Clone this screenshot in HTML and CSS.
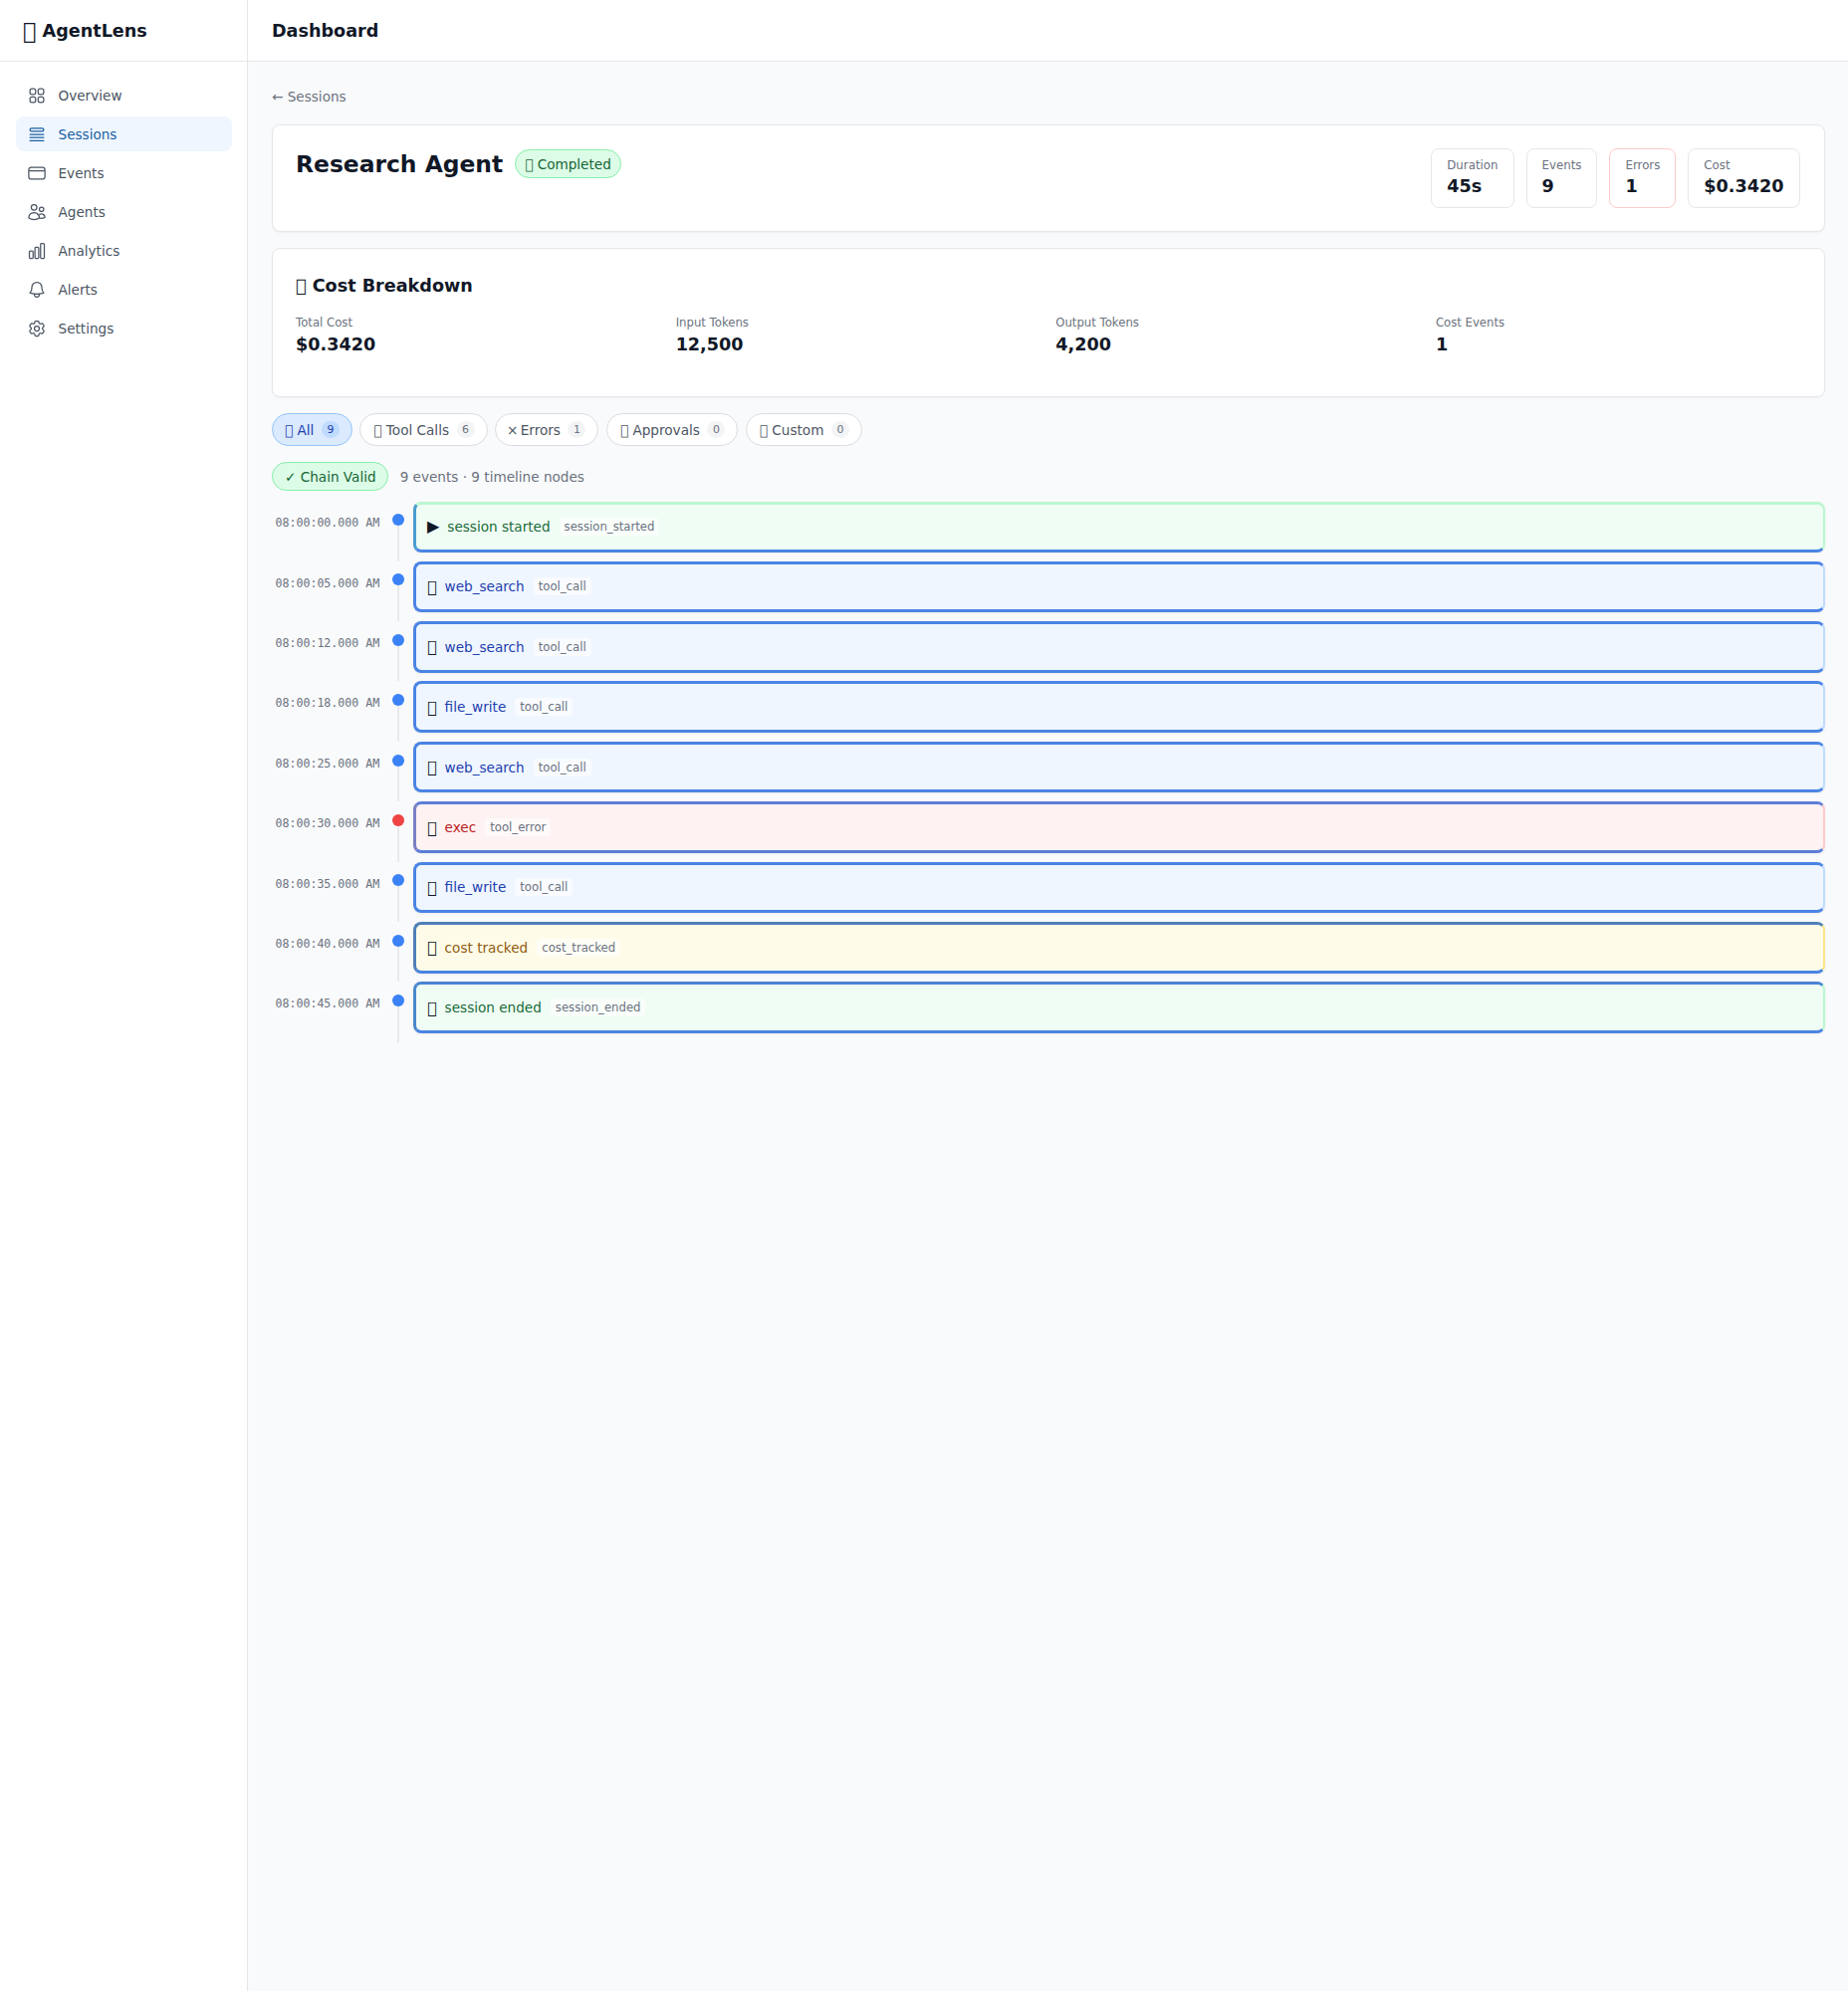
FILE: index.html
```html
<!DOCTYPE html>
<html lang="en">
<head>
<meta charset="utf-8">
<title>AgentLens</title>
<link rel="stylesheet" href="styles.css">
</head>
<body>
<div class="app">
  <aside class="sidebar">
    <div class="brand"><span class="brand-icon">&#xE0FF;</span> AgentLens</div>
    <nav class="nav">
      <a class="nav-item"><svg class="nav-icon" viewBox="0 0 24 24"><path d="M3.75 6A2.25 2.25 0 0 1 6 3.75h2.25A2.25 2.25 0 0 1 10.5 6v2.25a2.25 2.25 0 0 1-2.25 2.25H6a2.25 2.25 0 0 1-2.25-2.25V6ZM3.75 15.75A2.25 2.25 0 0 1 6 13.5h2.25a2.25 2.25 0 0 1 2.25 2.25V18a2.25 2.25 0 0 1-2.25 2.25H6A2.25 2.25 0 0 1 3.75 18v-2.25ZM13.5 6a2.25 2.25 0 0 1 2.25-2.25H18A2.25 2.25 0 0 1 20.25 6v2.25A2.25 2.25 0 0 1 18 10.5h-2.25a2.25 2.25 0 0 1-2.25-2.25V6ZM13.5 15.75a2.25 2.25 0 0 1 2.25-2.25H18a2.25 2.25 0 0 1 2.25 2.25V18A2.25 2.25 0 0 1 18 20.25h-2.25A2.25 2.25 0 0 1 13.5 18v-2.25Z"/></svg>Overview</a>
      <a class="nav-item active"><svg class="nav-icon" viewBox="0 0 24 24"><path d="M3.75 12h16.5m-16.5 3.75h16.5M3.75 19.5h16.5M5.625 4.5h12.75a1.875 1.875 0 0 1 0 3.75H5.625a1.875 1.875 0 0 1 0-3.75Z"/></svg>Sessions</a>
      <a class="nav-item"><svg class="nav-icon" viewBox="0 0 24 24"><path d="M2.25 9h19.5M5.25 4.875h13.5a3 3 0 0 1 3 3v8.25a3 3 0 0 1-3 3H5.25a3 3 0 0 1-3-3v-8.25a3 3 0 0 1 3-3Z"/></svg>Events</a>
      <a class="nav-item"><svg class="nav-icon" viewBox="0 0 24 24"><path d="M15 19.128a9.38 9.38 0 0 0 2.625.372 9.337 9.337 0 0 0 4.121-.952 4.125 4.125 0 0 0-7.533-2.493M15 19.128v-.003c0-1.113-.285-2.16-.786-3.07M15 19.128v.106A12.318 12.318 0 0 1 8.624 21c-2.331 0-4.512-.645-6.374-1.766l-.001-.109a6.375 6.375 0 0 1 11.964-3.07M12 6.375a3.375 3.375 0 1 1-6.75 0 3.375 3.375 0 0 1 6.75 0Zm8.25 2.25a2.625 2.625 0 1 1-5.25 0 2.625 2.625 0 0 1 5.25 0Z"/></svg>Agents</a>
      <a class="nav-item"><svg class="nav-icon" viewBox="0 0 24 24"><path d="M3 13.125C3 12.504 3.504 12 4.125 12h2.25c.621 0 1.125.504 1.125 1.125v6.75C7.5 20.496 6.996 21 6.375 21h-2.25A1.125 1.125 0 0 1 3 19.875v-6.75ZM9.75 8.625c0-.621.504-1.125 1.125-1.125h2.25c.621 0 1.125.504 1.125 1.125v11.25c0 .621-.504 1.125-1.125 1.125h-2.25a1.125 1.125 0 0 1-1.125-1.125V8.625ZM16.5 4.125c0-.621.504-1.125 1.125-1.125h2.25C20.496 3 21 3.504 21 4.125v15.75c0 .621-.504 1.125-1.125 1.125h-2.25a1.125 1.125 0 0 1-1.125-1.125V4.125Z"/></svg>Analytics</a>
      <a class="nav-item"><svg class="nav-icon" viewBox="0 0 24 24"><path d="M14.857 17.082a23.848 23.848 0 0 0 5.454-1.31A8.967 8.967 0 0 1 18 9.75V9A6 6 0 0 0 6 9v.75a8.967 8.967 0 0 1-2.312 6.022c1.733.64 3.56 1.085 5.455 1.31m5.714 0a24.255 24.255 0 0 1-5.714 0m5.714 0a3 3 0 1 1-5.714 0"/></svg>Alerts</a>
      <a class="nav-item"><svg class="nav-icon" viewBox="0 0 24 24"><path d="M9.594 3.94c.09-.542.56-.94 1.11-.94h2.593c.55 0 1.02.398 1.11.94l.213 1.281c.063.374.313.686.645.87.074.04.147.083.22.127.325.196.72.257 1.075.124l1.217-.456a1.125 1.125 0 0 1 1.37.49l1.296 2.247a1.125 1.125 0 0 1-.26 1.431l-1.003.827c-.293.241-.438.613-.43.992a7.723 7.723 0 0 1 0 .255c-.008.378.137.75.43.991l1.004.827c.424.35.534.955.26 1.43l-1.298 2.247a1.125 1.125 0 0 1-1.369.491l-1.217-.456c-.355-.133-.75-.072-1.076.124a6.47 6.47 0 0 1-.22.128c-.331.183-.581.495-.644.869l-.213 1.281c-.09.543-.56.94-1.11.94h-2.594c-.55 0-1.019-.398-1.11-.94l-.213-1.281c-.062-.374-.312-.686-.644-.87a6.52 6.52 0 0 1-.22-.127c-.325-.196-.72-.257-1.076-.124l-1.217.456a1.125 1.125 0 0 1-1.369-.49l-1.297-2.247a1.125 1.125 0 0 1 .26-1.431l1.004-.827c.292-.24.437-.613.43-.991a6.932 6.932 0 0 1 0-.255c.007-.38-.138-.751-.43-.992l-1.004-.827a1.125 1.125 0 0 1-.26-1.43l1.297-2.247a1.125 1.125 0 0 1 1.37-.491l1.216.456c.356.133.751.072 1.076-.124.072-.044.146-.086.22-.128.332-.183.582-.495.644-.869l.214-1.28Z"/><path d="M15 12a3 3 0 1 1-6 0 3 3 0 0 1 6 0Z"/></svg>Settings</a>
    </nav>
  </aside>
  <div class="content">
    <header class="topbar">Dashboard</header>
    <main class="main">
      <a class="back">← Sessions</a>
      <section class="card head-card">
        <div class="title-wrap">
          <h1 class="title">Research Agent</h1>
          <span class="status">&#xE0FF; Completed</span>
        </div>
        <div class="stats">
          <div class="stat"><div class="stat-label">Duration</div><div class="stat-value">45s</div></div>
          <div class="stat"><div class="stat-label">Events</div><div class="stat-value">9</div></div>
          <div class="stat stat-error"><div class="stat-label">Errors</div><div class="stat-value">1</div></div>
          <div class="stat"><div class="stat-label">Cost</div><div class="stat-value">$0.3420</div></div>
        </div>
      </section>
      <section class="card cost-card">
        <h2 class="cost-title">&#xE0FF; Cost Breakdown</h2>
        <div class="cost-grid">
          <div><div class="cost-label">Total Cost</div><div class="cost-value">$0.3420</div></div>
          <div><div class="cost-label">Input Tokens</div><div class="cost-value">12,500</div></div>
          <div><div class="cost-label">Output Tokens</div><div class="cost-value">4,200</div></div>
          <div><div class="cost-label">Cost Events</div><div class="cost-value">1</div></div>
        </div>
      </section>
      <div class="filters">
        <button class="pill pill-active"><span>&#xE0FF; All</span><span class="count">9</span></button>
        <button class="pill"><span>&#xE0FF; Tool Calls</span><span class="count">6</span></button>
        <button class="pill"><span><span class="x-mark">×</span> Errors</span><span class="count">1</span></button>
        <button class="pill"><span>&#xE0FF; Approvals</span><span class="count">0</span></button>
        <button class="pill"><span>&#xE0FF; Custom</span><span class="count">0</span></button>
      </div>
      <div class="chain-row">
        <span class="chain">✓ Chain Valid</span>
        <span class="chain-note">9 events · 9 timeline nodes</span>
      </div>
      <div class="timeline">
        <div class="row"><div class="time">08:00:00.000 AM</div><div class="rail"><span class="dot"></span></div><div class="ev ev-first"><span class="ev-icon">▶</span><span class="ev-name c-green">session started</span><span class="ev-type">session_started</span></div></div>
        <div class="row"><div class="time">08:00:05.000 AM</div><div class="rail"><span class="dot"></span></div><div class="ev ev-blue"><span class="ev-icon">&#xE0FF;</span><span class="ev-name c-blue">web_search</span><span class="ev-type">tool_call</span></div></div>
        <div class="row"><div class="time">08:00:12.000 AM</div><div class="rail"><span class="dot"></span></div><div class="ev ev-blue"><span class="ev-icon">&#xE0FF;</span><span class="ev-name c-blue">web_search</span><span class="ev-type">tool_call</span></div></div>
        <div class="row"><div class="time">08:00:18.000 AM</div><div class="rail"><span class="dot"></span></div><div class="ev ev-blue"><span class="ev-icon">&#xE0FF;</span><span class="ev-name c-blue">file_write</span><span class="ev-type">tool_call</span></div></div>
        <div class="row"><div class="time">08:00:25.000 AM</div><div class="rail"><span class="dot"></span></div><div class="ev ev-blue"><span class="ev-icon">&#xE0FF;</span><span class="ev-name c-blue">web_search</span><span class="ev-type">tool_call</span></div></div>
        <div class="row"><div class="time">08:00:30.000 AM</div><div class="rail"><span class="dot dot-red"></span></div><div class="ev ev-red"><span class="ev-icon">&#xE0FF;</span><span class="ev-name c-red">exec</span><span class="ev-type">tool_error</span></div></div>
        <div class="row"><div class="time">08:00:35.000 AM</div><div class="rail"><span class="dot"></span></div><div class="ev ev-blue"><span class="ev-icon">&#xE0FF;</span><span class="ev-name c-blue">file_write</span><span class="ev-type">tool_call</span></div></div>
        <div class="row"><div class="time">08:00:40.000 AM</div><div class="rail"><span class="dot"></span></div><div class="ev ev-yellow"><span class="ev-icon">&#xE0FF;</span><span class="ev-name c-amber">cost tracked</span><span class="ev-type">cost_tracked</span></div></div>
        <div class="row"><div class="time">08:00:45.000 AM</div><div class="rail"><span class="dot"></span></div><div class="ev ev-green"><span class="ev-icon">&#xE0FF;</span><span class="ev-name c-green">session ended</span><span class="ev-type">session_ended</span></div></div>
      </div>
    </main>
  </div>
</div>
</body>
</html>
```

FILE: styles.css
```css
* { box-sizing: border-box; }
html, body { margin: 0; padding: 0; }
body { font-family: "DejaVu Sans", sans-serif; color: #111827; background: #f9fafb; }
.app { display: flex; min-height: 2000px; }
.sidebar { width: 249px; flex: none; background: #fff; border-right: 1px solid #e5e7eb; }
.brand { height: 62px; padding: 0 23px; display: flex; align-items: center; white-space: pre; font-size: 17.6px; font-weight: 700; border-bottom: 1px solid #e5e7eb; }
.brand-icon { font-size: 22.4px; font-weight: 400; }
.nav { padding: 16px 15px 0 16px; display: flex; flex-direction: column; gap: 4px; }
.nav-item { height: 35px; display: flex; align-items: center; gap: 11.5px; padding: 0 11px; border-radius: 8px; font-size: 13.6px; color: #4b5563; }
.nav-item.active { background: #eff6ff; color: #1b5fa0; }
.nav-icon { width: 20px; height: 20px; flex: none; fill: none; stroke: currentColor; stroke-width: 1.5; stroke-linecap: round; stroke-linejoin: round; }
.content { flex: 1; min-width: 0; display: flex; flex-direction: column; }
.topbar { height: 62px; padding: 0 24px; display: flex; align-items: center; background: #fff; border-bottom: 1px solid #e5e7eb; font-size: 17.6px; font-weight: 700; }
.main { padding: 25px 23.5px 24px 24px; }
.back { display: block; font-size: 13.6px; line-height: 20px; color: #6b7280; margin-bottom: 18px; }
.card { background: #fff; border: 1px solid #e5e7eb; border-radius: 8px; box-shadow: 0 1px 2px rgba(0,0,0,.04); }
.head-card { display: flex; justify-content: space-between; align-items: flex-start; margin-bottom: 16px; height: 108.3px; padding: 23px 24px 0 23px; }
.title-wrap { display: flex; align-items: center; gap: 12px; margin-top: 1px; }
.title { margin: 0; font-size: 23.4px; line-height: 28px; font-weight: 700; }
.status { display: inline-flex; align-items: center; white-space: pre; height: 29px; padding: 0 9px; border-radius: 15px; font-size: 13.6px; color: #166534; background: #dcfce7; border: 1px solid #86efac; }
.stats { display: flex; gap: 12px; }
.stat { padding: 6.5px 15px 0; height: 59.5px; border: 1px solid #e5e7eb; border-radius: 8px; background: #fff; }
.stat-error { border-color: #fecaca; }
.stat-label { font-size: 11.8px; line-height: 18px; color: #6b7280; }
.stat-value { font-size: 17.6px; line-height: 24px; margin-top: .5px; font-weight: 700; }
.cost-card { height: 150px; margin-bottom: 16px; padding: 24px 24px 0 23px; }
.cost-title { margin: 0 0 16px; font-size: 17.6px; line-height: 26px; font-weight: 700; }
.cost-grid { display: grid; grid-template-columns: repeat(4, 1fr); gap: 16px; }
.cost-label { font-size: 11.7px; line-height: 16px; color: #6b7280; }
.cost-value { font-size: 17.6px; line-height: 24px; margin-top: 1.5px; font-weight: 700; }
.filters { display: flex; gap: 7.5px; margin-bottom: 16px; }
.pill { font: inherit; font-size: 13.6px; height: 33px; padding: 0 12px 0 13px; display: inline-flex; align-items: center; gap: 7.5px; white-space: pre; border-radius: 17px; border: 1.5px solid #d9dce1; background: #fff; color: #4b5563; }
.pill-active { padding-left: 12px; background: #dbeafe; border-color: #93c5fd; color: #1e40af; }
.x-mark { margin-left: -2px; margin-right: -2px; }
.count { min-width: 18px; height: 17px; padding: 0 5px; border-radius: 9px; font-size: 10.9px; display: inline-flex; align-items: center; justify-content: center; background: #f3f4f6; color: #6b7280; }
.pill-active .count { background: #bfdbfe; color: #1e40af; }
.chain-row { display: flex; align-items: center; gap: 12px; margin-bottom: 10px; }
.chain { height: 29px; padding: 0 11px 0 12px; display: inline-flex; align-items: center; border-radius: 15px; font-size: 13.6px; color: #166534; background: #dcfce7; border: 1px solid #86efac; }
.chain-note { font-size: 13.6px; color: #6b7280; }
.row { display: flex; height: 60.4px; }
.time { width: 111.5px; padding: 15px 3.3px 0 0; text-align: right; font-family: "DejaVu Sans Mono", monospace; font-size: 11.6px; line-height: 14px; color: #6b7280; flex: none; }
.rail { width: 30.5px; flex: none; position: relative; display: flex; flex-direction: column; align-items: center; }
.rail::before { content: ""; position: absolute; top: 13px; bottom: 0; left: 14.2px; width: 2px; background: #e8eaed; }
.dot { position: relative; width: 12px; height: 12px; margin-top: 12.8px; border-radius: 50%; background: #3b82f6; }
.dot-red { background: #ef4444; }
.ev { flex: 1; height: 51.6px; display: flex; align-items: center; gap: 8px; padding: 0 12px 0 11px; border-radius: 8px; border-style: solid; border-width: 3px 2px 3px 3px; font-size: 13.6px; box-shadow: 0 1px 3px rgba(0,0,0,.05); }
.ev-icon { font-size: 16px; color: #111827; }
.ev-type { font-size: 11.68px; line-height: 18px; padding: 0 5px; border-radius: 4px; background: rgba(255,255,255,.6); color: #6b7280; margin-left: 1px; }
.c-green { color: #1a6b3a; }
.c-blue { color: #1e40af; }
.c-red { color: #b91c1c; }
.c-amber { color: #8f5a0e; }
.ev-first { background: #f0fdf4; height: 50.6px; margin-top: 1px; padding-bottom: 2px; border-color: #bbf7d0 #bbf7d0 #4a84e4 #4a9ccf; }
.ev-blue { background: #eff6ff; border-color: #4a84e4 #bfdbfe #4a84e4 #4a84e4; }
.ev-red { background: #fef2f2; border-color: #5f7fd8 #fecaca #5a7dd8 #7b7fc4; }
.ev-yellow { background: #fefce8; border-color: #4f7fb8 #fde68a #4a84e4 #4f7fb8; }
.ev-green { background: #f0fdf4; border-color: #4a84d4 #bbf7d0 #4a84e4 #4a88cc; }
```
